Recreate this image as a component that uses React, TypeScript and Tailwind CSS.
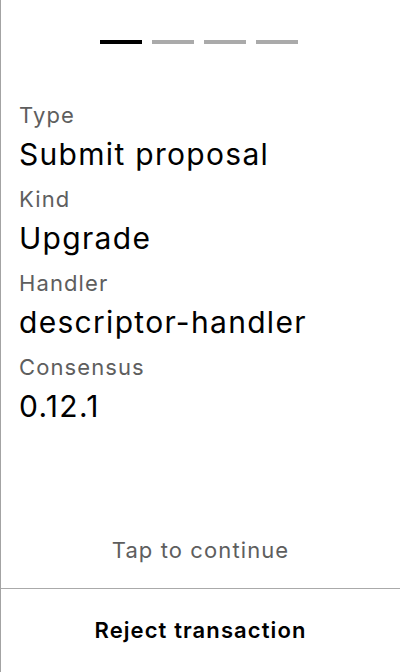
import React from 'react';

const fields = [
  { label: 'Type', value: 'Submit proposal' },
  { label: 'Kind', value: 'Upgrade' },
  { label: 'Handler', value: 'descriptor-handler' },
  { label: 'Consensus', value: '0.12.1' },
];

const App: React.FC = () => {
  return (
    <div
      className="flex flex-col h-[672px] w-[400px] bg-white border-l border-[#a3a3a3] text-black tracking-[1.1px]"
      style={{ fontFamily: 'Inter, "Noto Sans", sans-serif' }}
    >
      {/* Step indicator */}
      <div className="flex justify-center gap-[10px] pt-10 pr-1">
        <div className="h-1 w-[42px] bg-black" />
        <div className="h-1 w-[42px] bg-[#aaaaaa]" />
        <div className="h-1 w-[42px] bg-[#aaaaaa]" />
        <div className="h-1 w-[42px] bg-[#aaaaaa]" />
      </div>

      {/* Details */}
      <div className="flex flex-col px-[18px] mt-[57px]">
        {fields.map((f) => (
          <div key={f.label} className="flex flex-col mb-[13px]">
            <span className="text-[22px] leading-7 text-[#5e5e5e]">{f.label}</span>
            <span className="text-[30px] leading-9 mt-[7px] tracking-[1.3px]">{f.value}</span>
          </div>
        ))}
      </div>

      <div className="flex-1" />

      <div className="flex justify-center pb-6 text-[22px] leading-7 text-[#5e5e5e]">Tap to continue</div>

      <button className="h-[84px] w-full border-t border-[#aaaaaa] text-[22px] font-semibold">
        Reject transaction
      </button>
    </div>
  );
};

export default App;
